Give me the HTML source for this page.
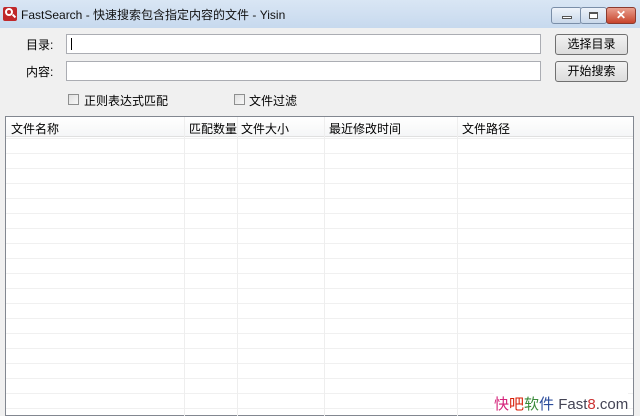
<!DOCTYPE html>
<html><head><meta charset="utf-8"><style>
*{margin:0;padding:0;box-sizing:border-box}
body{width:640px;height:416px;overflow:hidden;background:#f0f0f0;font-family:"Liberation Sans","Noto Sans CJK SC",sans-serif;font-size:12px;color:#000;position:relative}
.abs{position:absolute}
.title{left:0;top:0;width:640px;height:28px;background:linear-gradient(#d9e6f4,#c7d9ee)}
.in{background:#fff;border:1px solid #abadb3;height:20px}
.btn{border:1px solid #707070;border-radius:3px;background:linear-gradient(#f2f2f2,#dcdcdc);height:21px;width:73px;text-align:center;line-height:19px}
.cb{width:11px;height:11px;border:1px solid #8e8f8f;background:linear-gradient(135deg,#e0e0e0,#f8f8f8)}
.wb{top:7px;height:17px;border:1px solid #7a8ea8;border-radius:3px;background:linear-gradient(#eef3fa,#c9d8ea)}
</style></head><body>
<div class="abs title"></div>
<div class="abs" style="left:3px;top:7px;width:14px;height:14px;background:#c0282a;border-radius:2px"></div>
<div class="abs" style="left:5px;top:8px;width:8px;height:8px;border:2px solid #fff;border-radius:50%"></div>
<div class="abs" style="left:12px;top:15px;width:4px;height:2px;background:#fff;transform:rotate(45deg)"></div>
<div class="abs" style="left:21px;top:6px;font-size:12px;color:#111">FastSearch - 快速搜索包含指定内容的文件 - Yisin</div>
<div class="abs wb" style="left:551px;width:31px"><div class="abs" style="left:10px;top:8px;width:10px;height:3px;background:#fff;border:1px solid #555"></div></div>
<div class="abs wb" style="left:580px;width:27px"><div class="abs" style="left:8px;top:4px;width:9px;height:7px;border:1px solid #555;border-top-width:2px;background:#fff"></div></div>
<div class="abs wb" style="left:606px;width:30px;background:linear-gradient(#e9a08f,#c8442c);border-color:#8b3a2e;color:#fff;text-align:center;font-weight:bold;line-height:14px">✕</div>
<div class="abs" style="left:26px;top:36px">目录:</div>
<div class="abs" style="left:26px;top:63px">内容:</div>
<div class="abs in" style="left:66px;top:34px;width:475px"><div class="abs" style="left:4px;top:3px;width:1px;height:12px;background:#000"></div></div>
<div class="abs in" style="left:66px;top:61px;width:475px"></div>
<div class="abs btn" style="left:555px;top:34px">选择目录</div>
<div class="abs btn" style="left:555px;top:61px">开始搜索</div>
<div class="abs cb" style="left:68px;top:94px"></div>
<div class="abs" style="left:84px;top:92px">正则表达式匹配</div>
<div class="abs cb" style="left:234px;top:94px"></div>
<div class="abs" style="left:249px;top:92px">文件过滤</div>
<div class="abs" style="left:5px;top:116px;width:629px;height:300px;background:#fff;border:1px solid #828790;
background-image:linear-gradient(#f0f0f0 1px,transparent 1px);background-size:100% 15px;background-position:0 21px"></div>
<div class="abs" style="left:6px;top:117px;width:627px;height:20px;background:linear-gradient(#fff,#f5f6f7);border-bottom:1px solid #e0e0e0"></div>
<div class="abs" style="left:184px;top:117px;width:1px;height:299px;background:#eee"></div>
<div class="abs" style="left:237px;top:117px;width:1px;height:299px;background:#eee"></div>
<div class="abs" style="left:324px;top:117px;width:1px;height:299px;background:#eee"></div>
<div class="abs" style="left:457px;top:117px;width:1px;height:299px;background:#eee"></div>
<div class="abs" style="left:11px;top:120px">文件名称</div>
<div class="abs" style="left:189px;top:120px">匹配数量</div>
<div class="abs" style="left:241px;top:120px">文件大小</div>
<div class="abs" style="left:329px;top:120px">最近修改时间</div>
<div class="abs" style="left:462px;top:120px">文件路径</div>
<div class="abs" style="left:494px;top:393px;font-size:15px;background:#fff"><span style="color:#d4237a">快</span><span style="color:#d81e06">吧</span><span style="color:#3a8a3a">软</span><span style="color:#2a4b9b">件</span> <span style="color:#445">Fast</span><span style="color:#c33">8</span><span style="color:#445">.com</span></div>
</body></html>
